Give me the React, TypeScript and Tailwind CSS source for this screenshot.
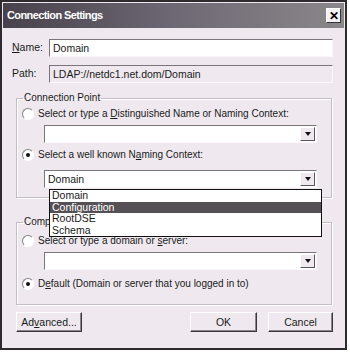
import React from 'react';

const font = { fontFamily: '"Liberation Sans", Arial, sans-serif' };

const Radio = ({ checked }: { checked?: boolean }) => (
  <div className="w-[12px] h-[12px] rounded-full border border-t-[#808080] border-l-[#808080] border-r-[#ffffff] border-b-[#ffffff] bg-white flex items-center justify-center shrink-0">
    {checked && <div className="w-[4px] h-[4px] rounded-full bg-[#111]" />}
  </div>
);

const Combo = ({ value }: { value?: string }) => (
  <div className="ml-[27px] w-[273px] h-[18px] bg-white border border-t-[#7a757a] border-l-[#7a757a] border-r-[#fbf8fb] border-b-[#fbf8fb] flex items-center">
    <span className="flex-1 pl-[3px] text-[10.5px] text-[#1a1a1a] leading-none">{value}</span>
    <div className="w-[15px] h-[14px] mr-[1px] bg-[#efe9ef] border border-t-white border-l-white border-r-[#5a565a] border-b-[#5a565a] flex items-center justify-center">
      <div className="w-0 h-0 border-l-[3.5px] border-r-[3.5px] border-t-[4px] border-l-transparent border-r-transparent border-t-[#111]" />
    </div>
  </div>
);

const TextBox = ({ value, flat }: { value: string; flat?: boolean }) => (
  <div className={`w-[284px] h-[18px] border border-t-[#7a757a] border-l-[#7a757a] border-r-[#fbf8fb] border-b-[#fbf8fb] flex items-center pl-[3px] text-[10.5px] leading-none text-[#1a1a1a] ${flat ? 'bg-[#efe9ef]' : 'bg-white'}`}>
    {value}
  </div>
);

const RadioRow = ({ checked, children }: { checked?: boolean; children: React.ReactNode }) => (
  <div className="flex items-center h-[12px] pl-[5px] gap-[4px] text-[10px] leading-none text-[#1a1a1a]">
    <Radio checked={checked} />
    <span>{children}</span>
  </div>
);

const Button = ({ children, className }: { children: React.ReactNode; className?: string }) => (
  <div className={`h-[20px] bg-[#efe9ef] border border-t-white border-l-white border-r-[#3a363a] border-b-[#3a363a] shadow-[inset_-1px_-1px_0_#8a868a] flex items-center justify-center text-[10.5px] text-[#1a1a1a] leading-none ${className}`}>
    {children}
  </div>
);

const App: React.FC = () => {
  return (
    <div className="w-[350px] h-[352px] bg-white" style={font}>
      <div className="relative w-[347px] h-[350px] border-2 border-[#2e2a2e] bg-[#efe9ef] flex flex-col">
        {/* Title bar */}
        <div className="mx-[1px] mt-[1px] h-[25px] bg-gradient-to-r from-[#48424c] via-[#6e6874] to-[#8a878a] flex items-center justify-between pl-[4px] pr-[3px]">
          <span className="text-white font-bold text-[11px] tracking-[-0.6px]">Connection Settings</span>
          <div className="w-[15px] h-[15px] bg-[#f4f0f4] border border-t-white border-l-white border-r-[#333] border-b-[#333] flex items-center justify-center text-[12px] font-bold leading-none text-black">
            ✕
          </div>
        </div>

        {/* Name / Path */}
        <div className="flex items-center mt-[11px] pl-[10px]">
          <span className="w-[37px] text-[10.5px] text-[#1a1a1a]"><u>N</u>ame:</span>
          <TextBox value="Domain" />
        </div>
        <div className="flex items-center mt-[8px] pl-[10px]">
          <span className="w-[37px] text-[10.5px] text-[#1a1a1a]">Path:</span>
          <TextBox value="LDAP://netdc1.net.dom/Domain" flat />
        </div>

        {/* Connection Point */}
        <fieldset className="mt-[9px] ml-[14px] w-[316px] h-[106px] border border-[#c4bec4] shadow-[1px_1px_0_#fff,inset_1px_1px_0_#fff] px-0 pb-0">
          <legend className="ml-[6px] px-[1px] text-[10px] leading-[12px] text-[#1a1a1a]">Connection Point</legend>
          <div className="flex flex-col mt-[4px]">
            <RadioRow>Select or type a <u>D</u>istinguished Name or Naming Context:</RadioRow>
            <div className="mt-[5px]"><Combo /></div>
            <div className="mt-[6px]"><RadioRow checked>Select a well known N<u>a</u>ming Context:</RadioRow></div>
            <div className="mt-[9px]"><Combo value="Domain" /></div>
          </div>
        </fieldset>

        {/* Computer */}
        <fieldset className="mt-[18px] ml-[14px] w-[316px] h-[89px] border border-[#c4bec4] shadow-[1px_1px_0_#fff,inset_1px_1px_0_#fff] px-0 pb-0">
          <legend className="ml-[6px] px-[1px] text-[10px] leading-[12px] text-[#1a1a1a]">Computer</legend>
          <div className="flex flex-col mt-[7px]">
            <RadioRow>Select or type a domain or <u>s</u>erver:</RadioRow>
            <div className="mt-[5px]"><Combo /></div>
            <div className="mt-[8px]"><RadioRow checked>D<u>e</u>fault (Domain or server that you logged in to)</RadioRow></div>
          </div>
        </fieldset>

        {/* Buttons */}
        <div className="flex items-center mt-[7px] pl-[14px]">
          <Button className="w-[66px]">Ad<u>v</u>anced...</Button>
          <Button className="w-[67px] ml-[108px]">OK</Button>
          <Button className="w-[65px] ml-[11px]">Cancel</Button>
        </div>

        {/* Open drop-down list */}
        <div className="absolute left-[47px] top-[187px] w-[273px] h-[48px] bg-white border border-[#111] flex flex-col text-[10.5px] leading-[11.5px] text-[#1a1a1a]">
          <div className="pl-[2px] h-[11.5px]">Domain</div>
          <div className="pl-[2px] h-[11.5px] bg-[#555055] text-white">Configuration</div>
          <div className="pl-[2px] h-[11.5px]">RootDSE</div>
          <div className="pl-[2px] h-[11.5px]">Schema</div>
        </div>
      </div>
    </div>
  );
};

export default App;
